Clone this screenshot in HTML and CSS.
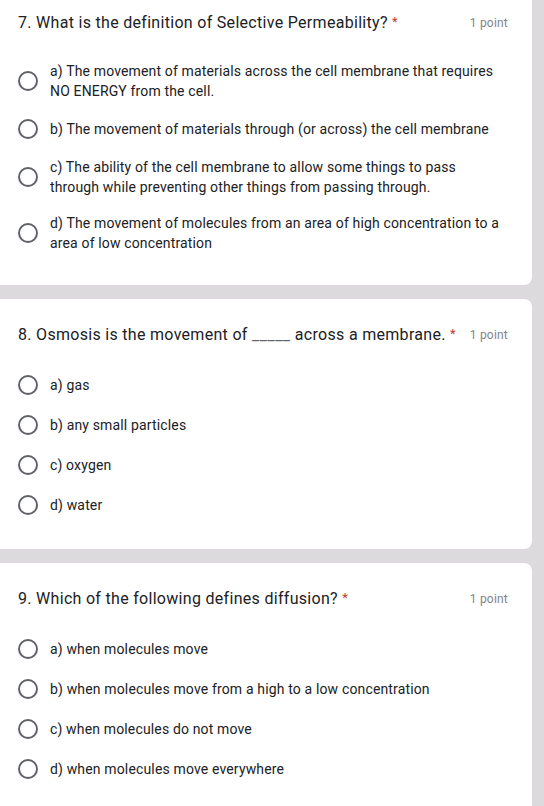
FILE: index.html
```html
<!DOCTYPE html>
<html lang="en">
<head>
<meta charset="utf-8">
<title>Quiz</title>
<link rel="stylesheet" href="styles.css">
</head>
<body>
<main class="form">
  <section class="card card-first">
    <div class="q-head">
      <div class="q-title">7. What is the definition of Selective Permeability? <span class="req">*</span></div>
      <div class="q-points">1 point</div>
    </div>
    <div class="options">
      <div class="option"><span class="radio"><span class="ring"></span></span><span class="label">a) The movement of materials across the cell membrane that requires NO ENERGY from the cell.</span></div>
      <div class="option"><span class="radio"><span class="ring"></span></span><span class="label">b) The movement of materials through (or across) the cell membrane</span></div>
      <div class="option"><span class="radio"><span class="ring"></span></span><span class="label">c) The ability of the cell membrane to allow some things to pass through while preventing other things from passing through.</span></div>
      <div class="option"><span class="radio"><span class="ring"></span></span><span class="label">d) The movement of molecules from an area of high concentration to a area of low concentration</span></div>
    </div>
  </section>

  <section class="card">
    <div class="q-head">
      <div class="q-title">8. Osmosis is the movement of <span class="blank">_____</span> across a membrane. <span class="req">*</span></div>
      <div class="q-points q-points-tight">1 point</div>
    </div>
    <div class="options">
      <div class="option"><span class="radio"><span class="ring"></span></span><span class="label">a) gas</span></div>
      <div class="option"><span class="radio"><span class="ring"></span></span><span class="label">b) any small particles</span></div>
      <div class="option"><span class="radio"><span class="ring"></span></span><span class="label">c) oxygen</span></div>
      <div class="option"><span class="radio"><span class="ring"></span></span><span class="label">d) water</span></div>
    </div>
  </section>

  <section class="card">
    <div class="q-head">
      <div class="q-title">9. Which of the following defines diffusion? <span class="req">*</span></div>
      <div class="q-points">1 point</div>
    </div>
    <div class="options">
      <div class="option"><span class="radio"><span class="ring"></span></span><span class="label">a) when molecules move</span></div>
      <div class="option"><span class="radio"><span class="ring"></span></span><span class="label">b) when molecules move from a high to a low concentration</span></div>
      <div class="option"><span class="radio"><span class="ring"></span></span><span class="label">c) when molecules do not move</span></div>
      <div class="option"><span class="radio"><span class="ring"></span></span><span class="label">d) when molecules move everywhere</span></div>
    </div>
  </section>
</main>
</body>
</html>
```

FILE: styles.css
```css
html, body {
  margin: 0;
  padding: 0;
  background: #dcdadd;
}

body {
  font-family: Roboto, "Liberation Sans", sans-serif;
  color: #202124;
}

.form {
  display: flex;
  flex-direction: column;
  gap: 14px;
  width: 532px;
}

.card {
  background: #ffffff;
  border-radius: 0 8px 8px 0;
  padding: 23px 24px 24px 18px;
}

.card-first {
  padding-top: 10px;
  border-radius: 0 0 8px 0;
}

.q-head {
  display: flex;
  align-items: center;
  justify-content: space-between;
  height: 24px;
}

.q-title {
  font-size: 16px;
  line-height: 24px;
  letter-spacing: 0.3px;
  color: #202124;
  white-space: nowrap;
}

.blank {
  color: #5f6368;
  letter-spacing: 0.5px;
}

.req {
  color: #c5392b;
  font-size: 13px;
  vertical-align: 2px;
}

.q-points {
  font-size: 12px;
  color: #80868b;
  white-space: nowrap;
  letter-spacing: 0.2px;
  padding-top: 2px;
}

.q-points-tight {
  margin-left: 10px;
}

.options {
  margin-top: 19px;
  display: flex;
  flex-direction: column;
}

.option {
  display: flex;
  align-items: center;
  gap: 12px;
  padding: 8px 0;
}

.radio {
  flex: none;
  width: 20px;
  height: 24px;
  display: flex;
  align-items: center;
  justify-content: center;
}

.ring {
  width: 20px;
  height: 20px;
  box-sizing: border-box;
  border: 2px solid #5f6368;
  border-radius: 50%;
}

.label {
  font-size: 14px;
  line-height: 20px;
  letter-spacing: 0.15px;
  color: #202124;
  padding-right: 5px;
}
```
